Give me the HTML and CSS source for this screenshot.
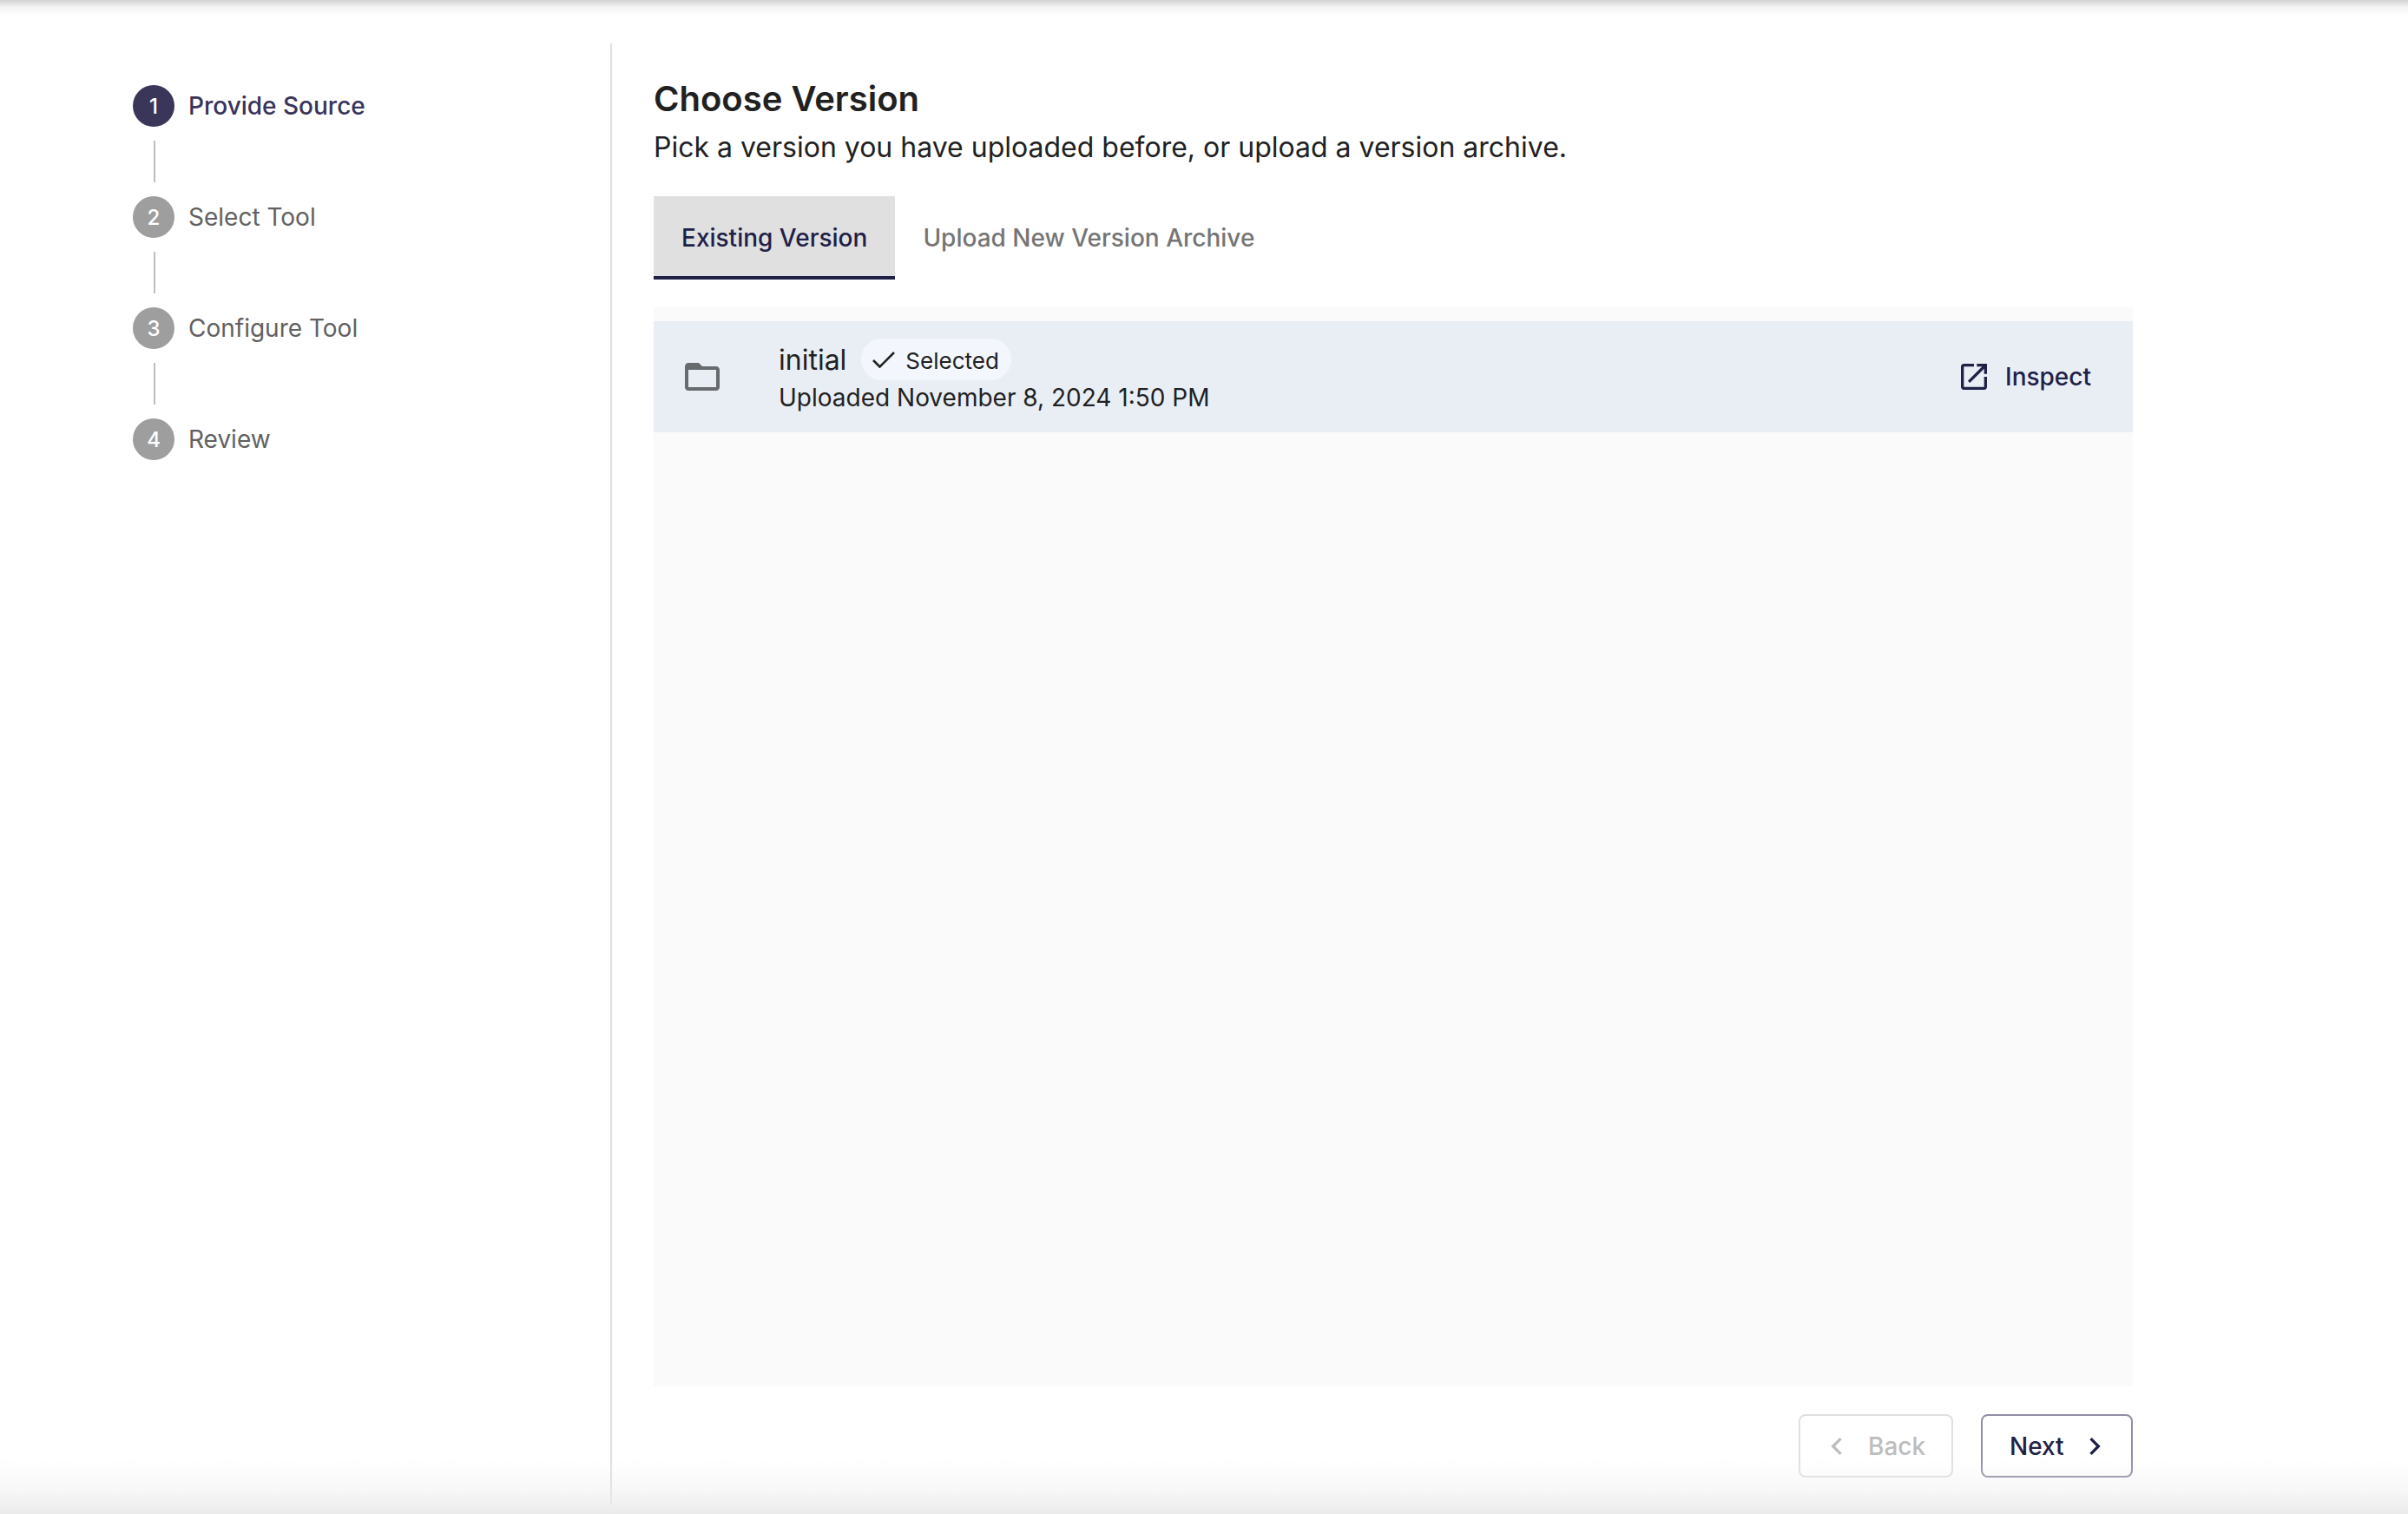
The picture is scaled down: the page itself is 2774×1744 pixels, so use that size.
FILE: index.html
```html
<!DOCTYPE html>
<html lang="en">
<head>
<meta charset="utf-8">
<title>Choose Version</title>
<link rel="stylesheet" href="styles.css">
</head>
<body>
<div class="shade-top"></div>
<div class="shell">
  <aside class="sidebar">
    <div class="step step-active"><span class="dot">1</span><span class="step-label">Provide Source</span></div>
    <div class="connector"></div>
    <div class="step"><span class="dot">2</span><span class="step-label">Select Tool</span></div>
    <div class="connector"></div>
    <div class="step"><span class="dot">3</span><span class="step-label">Configure Tool</span></div>
    <div class="connector"></div>
    <div class="step"><span class="dot">4</span><span class="step-label">Review</span></div>
  </aside>
  <main class="main">
    <h1 class="title">Choose Version</h1>
    <p class="subtitle">Pick a version you have uploaded before, or upload a version archive.</p>
    <div class="tabs">
      <div class="tab tab-active">Existing Version</div>
      <div class="tab">Upload New Version Archive</div>
    </div>
    <section class="panel">
      <div class="row">
        <svg class="icon-folder" viewBox="0 0 24 24"><path d="M20 6h-8l-2-2H4c-1.1 0-1.99.9-1.99 2L2 18c0 1.1.9 2 2 2h16c1.1 0 2-.9 2-2V8c0-1.1-.9-2-2-2zm0 12H4V8h16v10z"/></svg>
        <div class="row-text">
          <div class="row-head">
            <span class="row-name">initial</span>
            <span class="badge">
              <svg class="icon-check" viewBox="0 0 26 19"><path d="M1 10l7.5 7.5L25 1"/></svg>
              <span class="badge-text">Selected</span>
            </span>
          </div>
          <div class="row-date">Uploaded November 8, 2024 1:50 PM</div>
        </div>
        <div class="inspect">
          <svg class="icon-btn" viewBox="0 0 24 24"><path d="M19 19H5V5h7V3H5c-1.11 0-2 .9-2 2v14c0 1.1.89 2 2 2h14c1.1 0 2-.9 2-2v-7h-2v7zM14 3v2h3.59l-9.83 9.83 1.41 1.41L19 6.41V10h2V3h-7z"/></svg>
          <span>Inspect</span>
        </div>
      </div>
    </section>
    <div class="actions">
      <button class="btn btn-back" type="button">
        <svg class="icon-btn" viewBox="0 0 24 24"><path d="M15.41 7.41L14 6l-6 6 6 6 1.41-1.41L10.83 12z"/></svg>
        <span>Back</span>
      </button>
      <button class="btn btn-next" type="button">
        <span>Next</span>
        <svg class="icon-btn" viewBox="0 0 24 24"><path d="M10 6L8.59 7.41 13.17 12l-4.58 4.59L10 18l6-6z"/></svg>
      </button>
    </div>
  </main>
</div>
<div class="shade-bottom"></div>
</body>
</html>
```
FILE: styles.css
```css
* { box-sizing: border-box; }
html, body { margin: 0; height: 100%; }
body {
  position: relative;
  height: 1744px;
  overflow: hidden;
  padding-top: 50px;
  background: #fff;
  font-family: Inter, "Liberation Sans", sans-serif;
  color: #212121;
}
.shade-top {
  position: absolute; left: 0; right: 0; top: 0; height: 18px;
  background: linear-gradient(to bottom, #d2d2d2, #f4f4f4 45%, #fff);
  pointer-events: none;
}
.shade-bottom {
  position: absolute; left: 0; right: 0; bottom: 0; height: 64px;
  background: linear-gradient(to bottom, rgba(235,235,235,0), rgba(235,235,235,.35) 55%, #ebebeb);
  pointer-events: none;
}
.shell { display: flex; height: 1684px; }
.sidebar {
  width: 705px;
  padding: 48px 0 0 153px;
  border-right: 2px solid #e0e0e0;
}
.step { display: flex; align-items: center; gap: 16px; height: 48px; color: #616161; font-size: 28px; }
.step-active { color: #37345a; font-weight: 500; }
.dot {
  width: 48px; height: 48px; border-radius: 50%;
  display: flex; align-items: center; justify-content: center;
  background: #9e9e9e; color: #fff; font-size: 24px; font-weight: 500;
}
.step-active .dot { background: #3a3659; }
.connector { width: 2px; height: 48px; margin: 16px 0 16px 24px; background: #bdbdbd; }
.main {
  width: 1752px;
  padding: 36px 0 32px 48px;
  display: flex; flex-direction: column;
}
.title { margin: 0; font-size: 40px; line-height: 56px; font-weight: 600; color: #212121; }
.subtitle { margin: 4px 0 32px; font-size: 32px; line-height: 48px; color: #212121; }
.tabs { display: flex; }
.tab {
  height: 96px; padding: 3px 32px 0;
  display: flex; align-items: center;
  border-bottom: 4px solid transparent;
  font-size: 28px; font-weight: 500; color: #757575;
}
.tab-active { background: #e0e0e0; border-bottom-color: #1f2147; color: #1f2147; }
.panel { flex: 1; margin-top: 32px; padding-top: 16px; background: #fafafa; }
.row {
  height: 128px; padding: 0 48px 0 32px;
  display: flex; align-items: center;
  background: #e9eef5;
}
.icon-folder { width: 48px; height: 48px; flex: none; fill: #676b6e; }
.row-text { flex: 1; margin-left: 64px; }
.row-head { display: flex; align-items: center; height: 48px; gap: 17px; }
.row-name { font-size: 32px; color: #212121; }
.badge {
  display: flex; align-items: center; gap: 12px;
  height: 48px; padding: 0 14px 0 13px;
  border-radius: 24px; background: #f3f6fc;
  font-size: 26px; color: #212121;
}
.badge-text { position: relative; top: 1px; }
.icon-check { width: 26px; height: 19px; fill: none; stroke: #212121; stroke-width: 2.6; }
.row-date { margin-top: 0; font-size: 28px; line-height: 40px; color: #212121; }
.inspect { display: flex; align-items: center; gap: 16px; font-size: 28px; font-weight: 500; color: #1f2147; }
.icon-btn { width: 40px; height: 40px; flex: none; fill: currentColor; }
.actions { display: flex; justify-content: flex-end; gap: 32px; margin-top: 32px; }
.btn {
  display: flex; align-items: center; gap: 16px;
  height: 73px;
  background: #fff; border-radius: 8px;
  font: 500 28px Inter, "Liberation Sans", sans-serif;
}
.btn-back { width: 178px; padding: 0 0 0 22px; border: 2px solid #e0e0e0; color: #bdbdbd; }
.btn-next { width: 175px; padding: 0 0 0 31px; gap: 15px; border: 2px solid #8f8ea6; color: #1f2147; }
```
